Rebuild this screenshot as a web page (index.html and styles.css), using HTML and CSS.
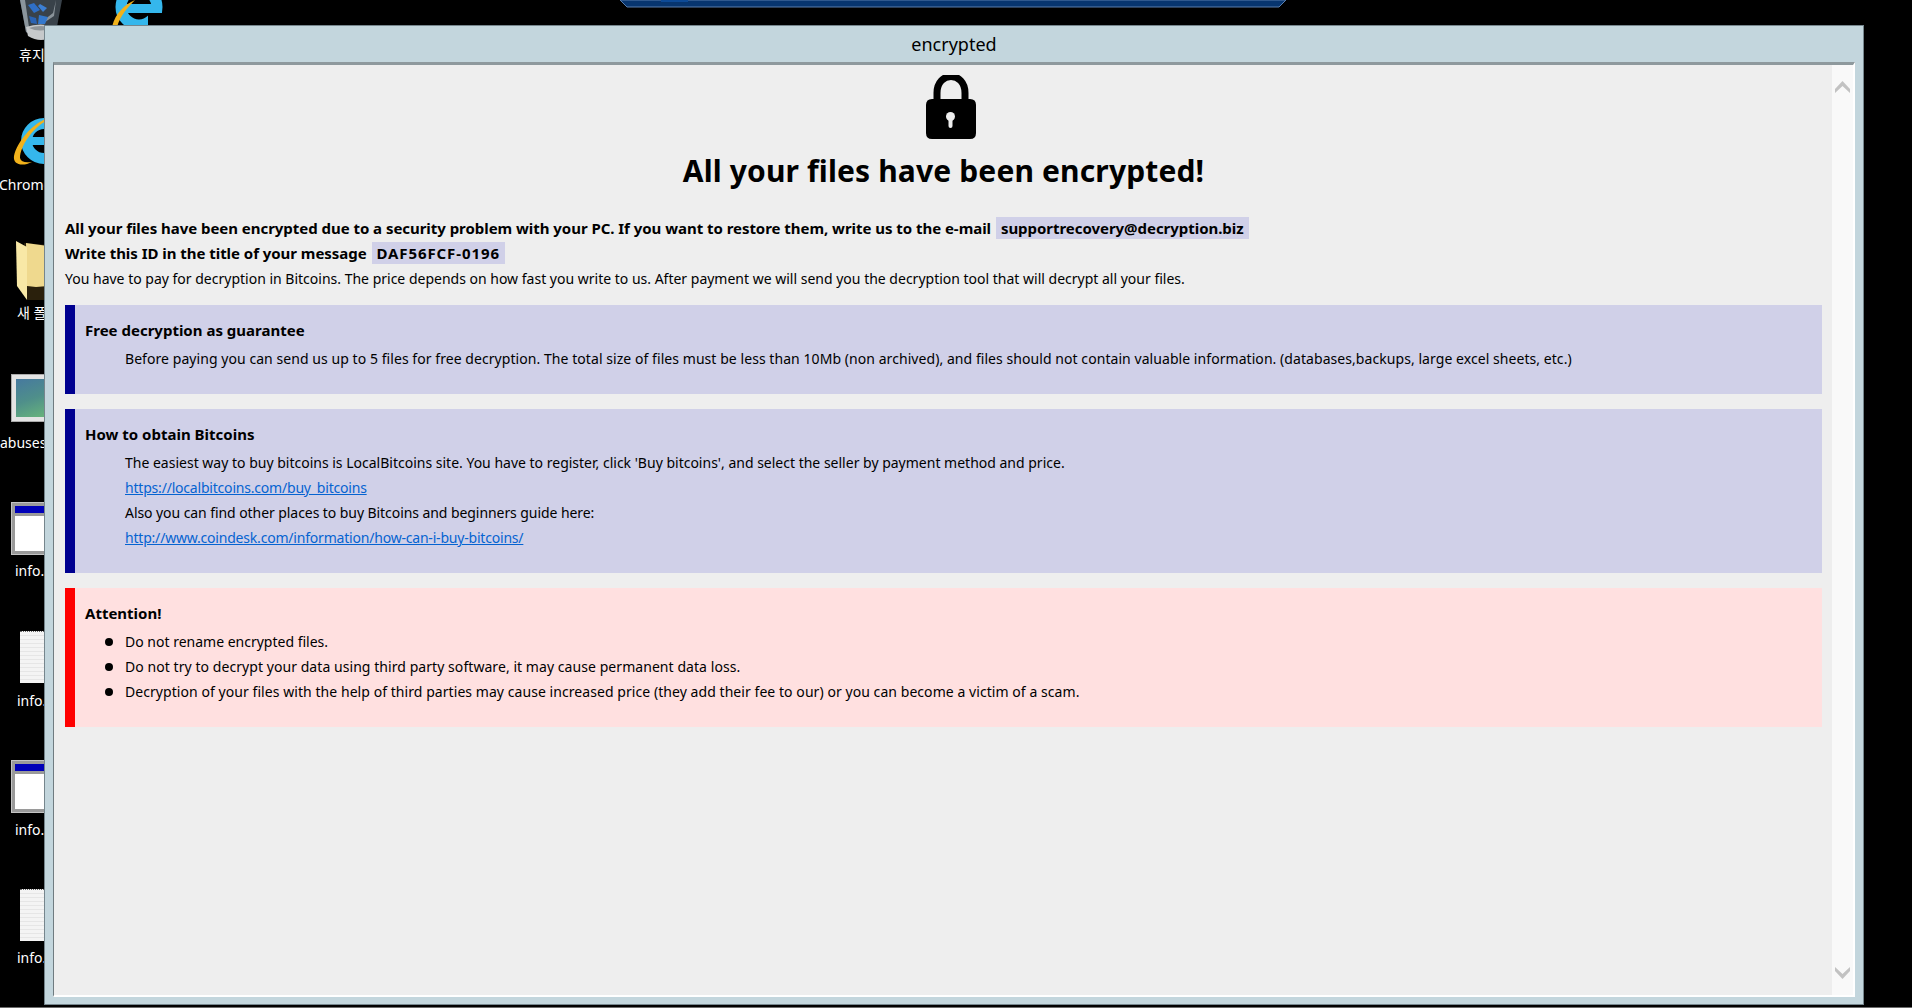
FILE: index.html
```html
<!DOCTYPE html>
<html lang="en">
<head>
  <meta charset="UTF-8">
  <title>encrypted</title>
  <link rel="stylesheet" href="styles.css">
</head>
<body>

  <!-- Top connection bar -->
  <div class="rdp-bar">
    <svg width="667" height="8" viewBox="0 0 667 8">
      <path d="M0 0 L7 7 H659 L666 0 Z" fill="#07356f" stroke="#5b7fae" stroke-width="1"/>
      <rect x="41" y="0" width="27" height="2" fill="#0d4a96"/>
    </svg>
  </div>

  <!-- Desktop icons, mostly hidden behind the window -->
  <div class="desktop-icon icon-bin">
    <svg width="44" height="41" viewBox="0 0 44 41">
      <path d="M0 0 L6 32 Q21 44 36 32 L42 0 Z" fill="#39424a"/>
      <path d="M0 0 L6 32 L10 34 L5 0 Z" fill="#8b959c"/>
      <path d="M36 0 L34 16 L25 22 L24 20 L33 13 L36 0 Z" fill="#8a939a"/>
      <path d="M6 27 Q20 22 36 27 L34 36 Q21 44 8 36 Z" fill="#c6c9cb"/>
      <path d="M9 28 Q20 24 33 28 Q20 33 9 28 Z" fill="#8f9599"/>
      <path d="M8 5 L14 3 L20 10 L14 13 Z" fill="#2f6fc6"/>
      <path d="M20 4 L27 8 L23 12 L18 6 Z" fill="#3c7fd4"/>
      <path d="M9 16 L16 18 L17 24 L11 23 Z" fill="#2a63b4"/>
      <path d="M19 15 L28 17 L25 24 L18 24 Z" fill="#3478cc"/>
    </svg>
  </div>
  <span class="desktop-label label-bin">휴지통</span>

  <div class="desktop-icon icon-ie-top">
    <svg width="58" height="26" viewBox="0 0 58 26">
      <circle cx="31" cy="7" r="18" fill="none" stroke="#35b7ec" stroke-width="11"/>
      <rect x="18" y="4" width="36" height="9" fill="#35b7ec"/>
      <rect x="40" y="13" width="18" height="13" fill="#000"/>
      <path d="M4 27 C7 14 16 5 27 0 C20 7 12 16 9 27 Z" fill="#f2b21b"/>
    </svg>
  </div>

  <div class="desktop-icon icon-ie">
    <svg width="34" height="52" viewBox="0 0 34 52">
      <circle cx="31" cy="25" r="17.5" fill="none" stroke="#35b7ec" stroke-width="11"/>
      <rect x="16" y="21" width="18" height="8" fill="#35b7ec"/>
      <path d="M33 3 C19 8 4 26 1 40 C0 47 6 50 14 48 L19 46 C12 47 8 46 7 42 C7 30 20 12 33 5 Z" fill="#f2b21b"/>
    </svg>
  </div>
  <span class="desktop-label label-chrome">Chrome</span>

  <div class="desktop-icon icon-folder">
    <svg width="32" height="62" viewBox="0 0 32 62">
      <path d="M8 3 L32 5 V60 H11 Z" fill="#2a200c"/>
      <path d="M10 3 L32 6 V46 L20 47 L11 46 Z" fill="#efd98e"/>
      <path d="M0 1 L11 7 V60 L1 46 Z" fill="#f8e8a6"/>
    </svg>
  </div>
  <span class="desktop-label label-folder">새 폴더</span>

  <div class="desktop-icon thumb icon-abuses"><div class="thumb-picture"></div></div>
  <span class="desktop-label label-abuses">abuses</span>

  <div class="desktop-icon win-icon icon-win1"><div class="win-icon-bar"></div><div class="win-icon-body"></div></div>
  <span class="desktop-label label-win1">info.hta</span>

  <div class="desktop-icon note icon-note1"></div>
  <span class="desktop-label label-note1">info.txt</span>

  <div class="desktop-icon win-icon icon-win2"><div class="win-icon-bar"></div><div class="win-icon-body"></div></div>
  <span class="desktop-label label-win2">info.hta</span>

  <div class="desktop-icon note icon-note2"></div>
  <span class="desktop-label label-note2">info.txt</span>

  <div class="taskbar-edge"></div>

  <!-- Window -->
  <div class="window">
    <div class="window-title">encrypted</div>

    <div class="frame">
      <div class="content">
        <div class="lock">
          <svg width="50" height="64" viewBox="0 0 50 64">
            <path d="M11 24 V18 C11 -4 39 -4 39 18 V24" fill="none" stroke="#000" stroke-width="7"/>
            <path d="M6 24 H44 Q50 24 50 30 V58 Q50 64 44 64 H6 Q0 64 0 58 V30 Q0 24 6 24 Z" fill="#000"/>
            <circle cx="24.5" cy="41.5" r="4.5" fill="#eee"/>
            <path d="M24.5 42 V51" stroke="#eee" stroke-width="4" stroke-linecap="round"/>
          </svg>
        </div>

        <h1>All your files have been encrypted!</h1>

        <p class="line bold">All your files have been encrypted due to a security problem with your PC. If you want to restore them, write us to the e-mail <span class="code">supportrecovery@decryption.biz</span></p>
        <p class="line bold">Write this ID in the title of your message <span class="code code-id">DAF56FCF-0196</span></p>
        <p class="line">You have to pay for decryption in Bitcoins. The price depends on how fast you write to us. After payment we will send you the decryption tool that will decrypt all your files.</p>

        <div class="box">
          <div class="box-title">Free decryption as guarantee</div>
          <div class="box-text">
            <p class="line wide">Before paying you can send us up to 5 files for free decryption. The total size of files must be less than 10Mb (non archived), and files should not contain valuable information. (databases,backups, large excel sheets, etc.)</p>
          </div>
        </div>

        <div class="box">
          <div class="box-title">How to obtain Bitcoins</div>
          <div class="box-text">
            <p class="line">The easiest way to buy bitcoins is LocalBitcoins site. You have to register, click 'Buy bitcoins', and select the seller by payment method and price.</p>
            <p class="line"><a href="#">https://localbitcoins.com/buy_bitcoins</a></p>
            <p class="line tight">Also you can find other places to buy Bitcoins and beginners guide here:</p>
            <p class="line"><a href="#">http://www.coindesk.com/information/how-can-i-buy-bitcoins/</a></p>
          </div>
        </div>

        <div class="box box-red">
          <div class="box-title">Attention!</div>
          <ul class="box-text bullets">
            <li class="line">Do not rename encrypted files.</li>
            <li class="line wide">Do not try to decrypt your data using third party software, it may cause permanent data loss.</li>
            <li class="line wide">Decryption of your files with the help of third parties may cause increased price (they add their fee to our) or you can become a victim of a scam.</li>
          </ul>
        </div>
      </div>

      <div class="scrollbar">
        <svg width="15" height="13" viewBox="0 0 15 13"><path d="M0 9 L7.5 1 L15 9 V13 L7.5 6 L0 13 Z" fill="#c2c2c2"/></svg>
        <svg width="15" height="13" viewBox="0 0 15 13"><path d="M0 0 L7.5 7 L15 0 V4 L7.5 12 L0 4 Z" fill="#c2c2c2"/></svg>
      </div>
    </div>
  </div>

</body>
</html>
```

FILE: styles.css
```css
/* General */
html, body {
  margin: 0;
  padding: 0;
  height: 100%;
}

body {
  position: relative;
  background: #000;
  font-family: "Noto Sans", "Noto Sans CJK KR", sans-serif;
  color: #000;
  overflow: hidden;
}

/* Top bar */
.rdp-bar {
  position: absolute;
  top: 0;
  left: 620px;
  line-height: 0;
}

.taskbar-edge {
  position: absolute;
  left: 0;
  right: 0;
  top: 1007px;
  height: 1px;
  background: #6b6b6b;
}

/* Desktop icons */
.desktop-icon {
  position: absolute;
  line-height: 0;
}

.desktop-label {
  position: absolute;
  color: #fff;
  font-size: 14px;
  line-height: 18px;
  white-space: nowrap;
}

.icon-bin { left: 20px; top: 0; }
.label-bin { left: 19px; top: 46px; }
.icon-ie-top { left: 108px; top: 0; }
.icon-ie { left: 13px; top: 116px; }
.label-chrome { left: -1px; top: 176px; }
.icon-folder { left: 16px; top: 240px; }
.label-folder { left: 17px; top: 304px; }

.thumb {
  left: 11px;
  top: 374px;
  width: 46px;
  height: 48px;
  box-sizing: border-box;
  padding: 4px;
  background: #e4e4e4;
  border: 1px solid #aaa;
}

.thumb-picture {
  height: 100%;
  background: linear-gradient(160deg, #46799f, #4f8f8a 50%, #6ab87a);
}

.label-abuses { left: 0; top: 434px; }

.win-icon {
  left: 11px;
  width: 48px;
  height: 53px;
  box-sizing: border-box;
  padding: 3px;
  background: #9a9a9a;
  border: 1px solid #c4c4c4;
}

.win-icon-bar {
  height: 7px;
  background: #0000b8;
  margin-bottom: 3px;
}

.win-icon-body {
  height: 35px;
  background: #fff;
}

.icon-win1 { top: 502px; }
.icon-win2 { top: 760px; }
.label-win1 { left: 15px; top: 562px; }
.label-win2 { left: 15px; top: 821px; }

.note {
  left: 20px;
  width: 40px;
  height: 52px;
  background: repeating-linear-gradient(#f4f4f4 0 3px, #e6e6e6 3px 4px);
  border-top: 1px dotted #666;
  box-sizing: border-box;
}

.icon-note1 { top: 631px; }
.icon-note2 { top: 889px; }
.label-note1 { left: 17px; top: 692px; }
.label-note2 { left: 17px; top: 949px; }

/* Window */
.window {
  position: absolute;
  left: 44px;
  top: 25px;
  width: 1820px;
  height: 980px;
  box-sizing: border-box;
  display: flex;
  flex-direction: column;
  background: #c3d6dd;
  border: 1px solid #76868d;
}

.window-title {
  height: 36px;
  line-height: 36px;
  text-align: center;
  font-size: 18px;
}

.frame {
  flex: 1;
  display: flex;
  margin: 0 8px 7px;
  border-top: 3px solid #8e999d;
  border-left: 1px solid #6f7b80;
  border-right: 2px solid #fff;
  border-bottom: 2px solid #fff;
}

.content {
  flex: 1;
  box-sizing: border-box;
  padding: 10px 10px 0 11px;
  background: #eee;
}

.scrollbar {
  width: 21px;
  box-sizing: border-box;
  padding: 15px 3px 15px;
  display: flex;
  flex-direction: column;
  justify-content: space-between;
  background: #f9f9f9;
}

/* Heading */
.lock {
  padding-left: 14px;
  text-align: center;
  line-height: 0;
}

h1 {
  margin: 12px 0 25px;
  font-size: 30px;
  line-height: 40px;
  font-weight: 700;
  letter-spacing: 0.14px;
  text-align: center;
}

/* Text */
.line {
  margin: 0;
  font-size: 14px;
  line-height: 25px;
}

.wide {
  letter-spacing: 0.06px;
}

.tight {
  letter-spacing: -0.07px;
}

.bold {
  font-size: 15px;
  font-weight: 700;
  letter-spacing: -0.04px;
}

.code {
  margin-left: 1px;
  padding: 1px 5px;
  background: #d0d0e8;
}

.code-id {
  letter-spacing: 0.9px;
}

a {
  color: #0563d1;
  letter-spacing: -0.2px;
}

/* Info boxes */
.box {
  margin-top: 15px;
  padding: 13px 10px 23px;
  background: #d0d0e8;
  border-left: 10px solid #000090;
}

.line + .box {
  margin-top: 14px;
}

.box-red {
  background: #ffe0e0;
  border-left-color: #f00;
}

.box-title {
  font-size: 15px;
  font-weight: 700;
  line-height: 25px;
  margin-bottom: 3px;
}

.box-text {
  margin: 0;
  padding: 0 0 0 40px;
}

.bullets {
  list-style: none;
}

.bullets li {
  position: relative;
}

.bullets li::before {
  content: "";
  position: absolute;
  left: -20px;
  top: 9px;
  width: 8px;
  height: 8px;
  border-radius: 50%;
  background: #000;
}
```
